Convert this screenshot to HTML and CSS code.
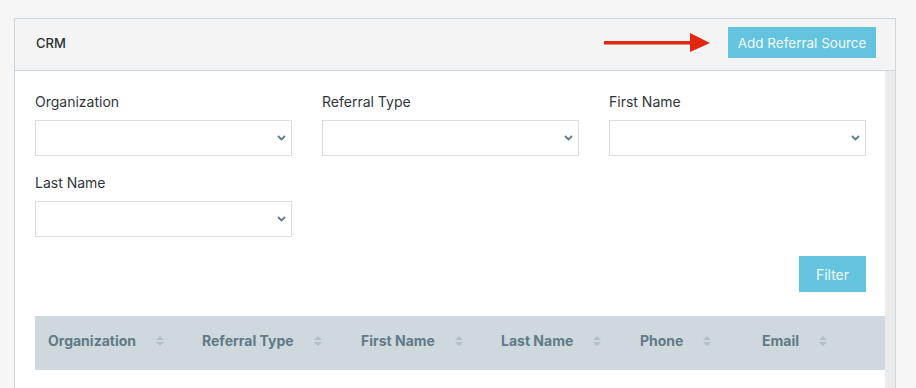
FILE: index.html
```html
<!DOCTYPE html>
<html lang="en">
<head>
<meta charset="UTF-8">
<meta name="viewport" content="width=device-width, initial-scale=1.0">
<title>CRM - Referral Sources</title>
<link rel="stylesheet" href="styles.css">
</head>
<body>
<div class="card">
  <div class="card-header">
    <span class="card-title">CRM</span>
    <div class="header-actions">
      <svg class="arrow" width="106" height="20" viewBox="0 0 106 20">
        <rect x="0" y="8" width="88" height="3.5" fill="#e2260f"/>
        <polygon points="86,0 106,10 86,19" fill="#e2260f"/>
      </svg>
      <button class="btn btn-info">Add Referral Source</button>
    </div>
  </div>
  <div class="card-body-wrap">
    <div class="card-body">
      <div class="filters">
        <div class="field">
          <label>Organization</label>
          <div class="select"><svg width="9" height="6" viewBox="0 0 9 6"><path d="M1 1l3.5 3.5 3.5-3.5" fill="none" stroke="#5f7a88" stroke-width="1.8"/></svg></div>
        </div>
        <div class="field">
          <label>Referral Type</label>
          <div class="select"><svg width="9" height="6" viewBox="0 0 9 6"><path d="M1 1l3.5 3.5 3.5-3.5" fill="none" stroke="#5f7a88" stroke-width="1.8"/></svg></div>
        </div>
        <div class="field">
          <label>First Name</label>
          <div class="select"><svg width="9" height="6" viewBox="0 0 9 6"><path d="M1 1l3.5 3.5 3.5-3.5" fill="none" stroke="#5f7a88" stroke-width="1.8"/></svg></div>
        </div>
        <div class="field">
          <label>Last Name</label>
          <div class="select"><svg width="9" height="6" viewBox="0 0 9 6"><path d="M1 1l3.5 3.5 3.5-3.5" fill="none" stroke="#5f7a88" stroke-width="1.8"/></svg></div>
        </div>
      </div>
      <div class="filter-row">
        <button class="btn btn-info btn-filter">Filter</button>
      </div>
      <table class="data-table">
        <thead>
          <tr>
            <th class="col-org">Organization<span class="sort"></span></th>
            <th class="col-type">Referral Type<span class="sort"></span></th>
            <th class="col-first">First Name<span class="sort"></span></th>
            <th class="col-last">Last Name<span class="sort"></span></th>
            <th class="col-phone">Phone<span class="sort"></span></th>
            <th class="col-email">Email<span class="sort"></span></th>
          </tr>
        </thead>
        <tbody></tbody>
      </table>
    </div>
    <div class="scroll-track"></div>
  </div>
</div>
</body>
</html>
```

FILE: styles.css
```css
body{margin:0;padding:18px 20px 0 14px;background:#f6f6f6;font-family:'Inter','Noto Sans',sans-serif;color:#2f3438;height:388px;box-sizing:border-box;overflow:hidden;}
.card{width:882px;box-sizing:border-box;border:1px solid #ccd6de;border-bottom:none;height:370px;display:flex;flex-direction:column;}
.card-header{display:flex;align-items:center;justify-content:space-between;padding:8px 19px 12px 21px;background:#f4f4f4;border-bottom:1px solid #ccd6de;}
.card-title{font-size:13px;font-weight:500;color:#2a2f33;}
.header-actions{display:flex;align-items:center;}
.arrow{display:block;margin-right:18px;margin-top:1px;}
.btn{font-family:inherit;border:none;border-radius:0;background:#64c3df;color:#f2fbfe;cursor:pointer;}
.btn-info{height:31px;width:148px;padding:0;font-size:13.5px;}
.card-body-wrap{flex:1;display:flex;overflow:hidden;}
.card-body{flex:1;background:#fff;padding:21px 0 0 20px;overflow:hidden;}
.scroll-track{width:10px;background:#ebebeb;}
.filters{display:grid;grid-template-columns:257px 257px 257px;column-gap:30px;row-gap:17px;}
.field label{display:block;font-size:14px;line-height:20px;color:#30363a;}
.select{margin-top:8px;height:36px;box-sizing:border-box;border:1px solid #dcdcdc;display:flex;align-items:center;justify-content:flex-end;padding-right:5px;}
.select svg{display:block;}
.filter-row{display:flex;justify-content:flex-end;width:831px;margin-top:19px;}
.btn-filter{height:36px;width:67px;padding:0;font-size:14px;}
.data-table{margin-top:24px;width:851px;border-collapse:collapse;table-layout:fixed;}
.data-table th{background:#cfd8dd;height:49px;padding:0 0 5px 13px;text-align:left;font-size:14px;font-weight:700;color:#5f7a88;white-space:nowrap;}
.sort{display:inline-block;vertical-align:middle;margin-left:20px;width:0;height:12px;position:relative;top:-1px;border-left:4px solid transparent;border-right:4px solid transparent;}
.sort::before,.sort::after{content:"";position:absolute;left:-4px;border-left:4px solid transparent;border-right:4px solid transparent;}
.sort::before{top:1px;border-bottom:4px solid #b3bfc6;}
.sort::after{top:7px;border-top:4px solid #b3bfc6;}
.col-org{width:141px;}
.col-type{width:146px;}
.col-first{width:127px;}
.col-last{width:126px;}
.col-phone{width:109px;}
```
